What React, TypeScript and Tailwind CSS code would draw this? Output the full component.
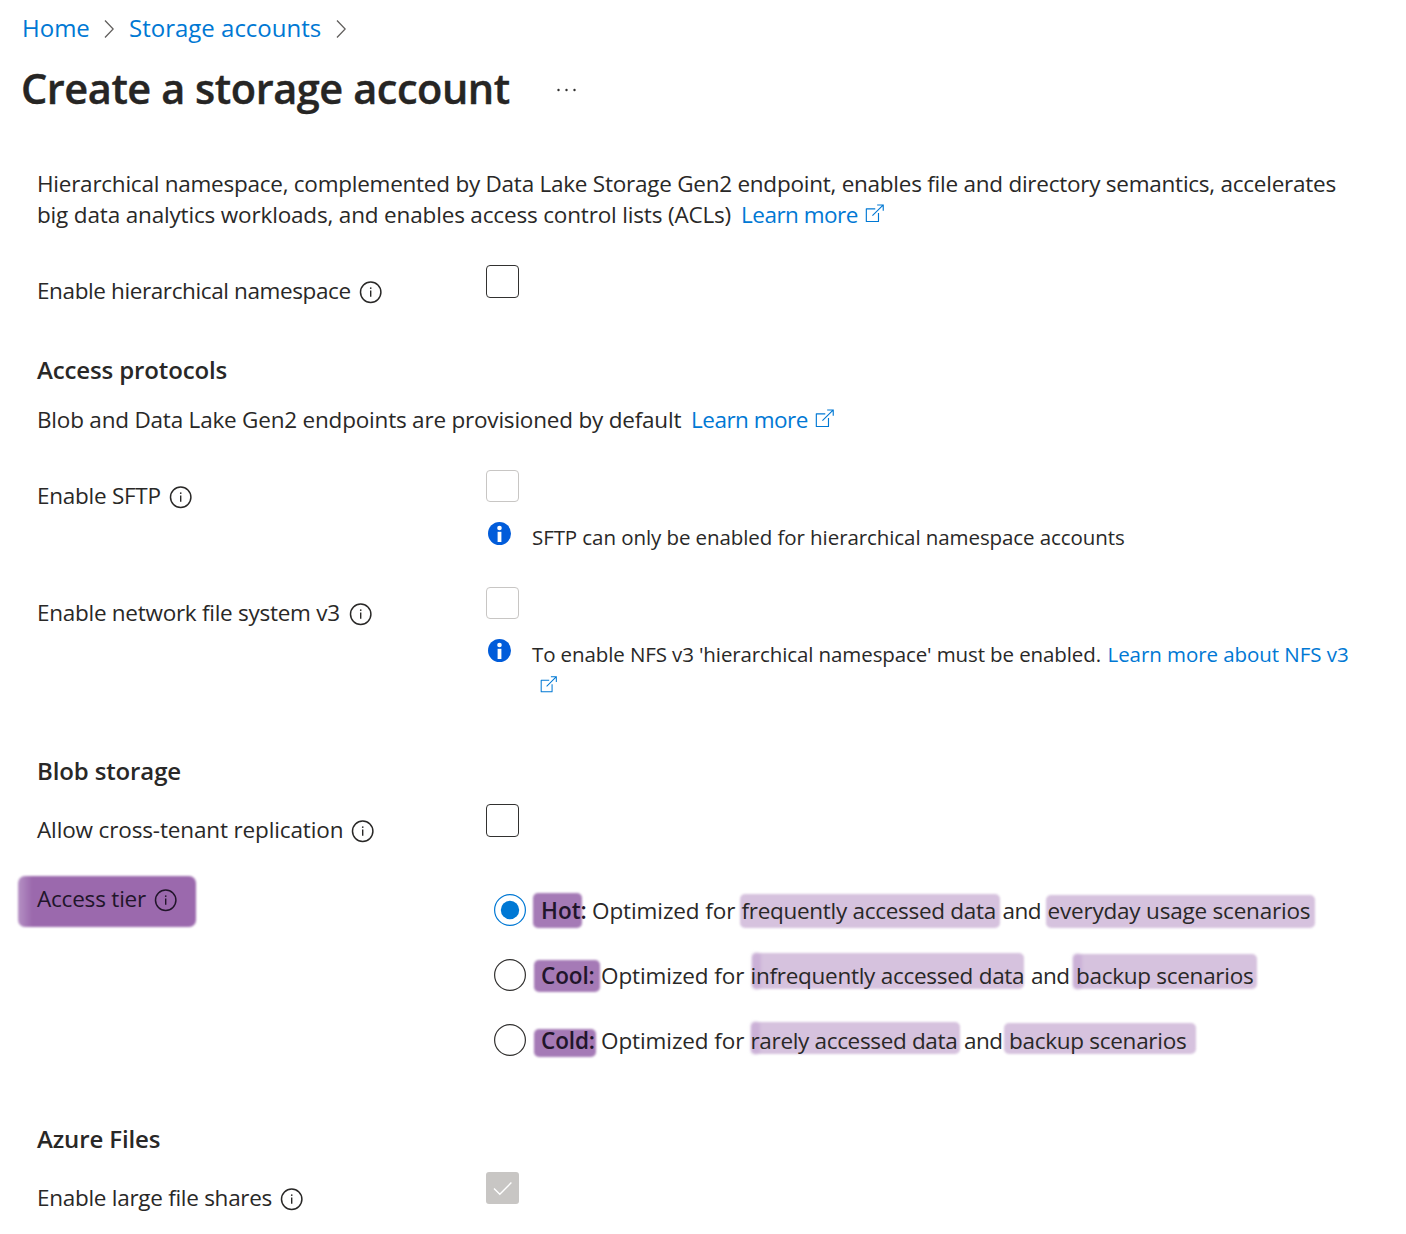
import type { ReactNode } from "react";

function InfoIcon() {
  return (
    <svg className="mt-[5px] size-[23px] shrink-0" viewBox="0 0 23 23" fill="none" stroke="currentColor">
      <circle cx="11.7" cy="11.3" r="10.2" strokeWidth="1.5" />
      <path d="M11.7 9.6V15.8" strokeWidth="1.4" />
      <path d="M11.7 6.4V7.9" strokeWidth="1.5" />
    </svg>
  );
}

function ExternalIcon({ className }: { className: string }) {
  return (
    <svg className={className} viewBox="0 0 20 20" fill="none" stroke="#0078d4" strokeWidth="1.2">
      <path d="M10.8 5.1H1.4V18.4H14.2V9.6" strokeLinejoin="round" />
      <path d="M7.8 12.2L19 1.1M12.8 1H19.2V7.2" />
    </svg>
  );
}

function InfoBadge() {
  return (
    <svg className="size-[23px] shrink-0" viewBox="0 0 23 23">
      <circle cx="11.5" cy="11.5" r="11.5" fill="#015cda" />
      <circle cx="11.5" cy="6" r="2.3" fill="#fff" />
      <rect x="9.6" y="9.8" width="3.8" height="10.2" fill="#fff" />
    </svg>
  );
}

function Chevron({ className }: { className: string }) {
  return (
    <svg className={className} viewBox="0 0 10 18" fill="none" stroke="#605e5c" strokeWidth="1.3">
      <path d="M1 .5L9.2 9L1 17.5" />
    </svg>
  );
}

function Label({ text, className }: { text: string; className: string }) {
  return (
    <div className="mt-[11px] flex h-[30px] w-[450px] shrink-0 leading-[30px]">
      <span className={`shrink-0 pl-px whitespace-nowrap ${className}`}>{text}</span>
      <InfoIcon />
    </div>
  );
}

function Heading({ children, className }: { children: ReactNode; className: string }) {
  return (
    <h2 className={`h-[30px] pl-px text-[24px] leading-[30px] font-semibold tracking-[-0.13px] whitespace-nowrap ${className}`}>
      {children}
    </h2>
  );
}

function Box({ disabled = false }: { disabled?: boolean }) {
  return (
    <div
      className={
        disabled
          ? "h-[32px] w-[33px] rounded-[4px] border-[1.5px] border-[#c8c6c4]"
          : "size-[33px] rounded-[4px] border-[1.5px] border-[#323130]"
      }
    />
  );
}

function Radio({ checked = false }: { checked?: boolean }) {
  return (
    <svg className="mr-[15px] mb-px size-[32px] shrink-0" viewBox="0 0 32 32" fill="none">
      <circle cx="16" cy="16" r="15.4" stroke={checked ? "#0078d4" : "#323130"} strokeWidth="1.2" />
      {checked && <circle cx="16" cy="16" r="9.2" fill="#0078d4" />}
    </svg>
  );
}

function Phrase({ text, className, mark, edge = false }: { text: string; className: string; mark?: string; edge?: boolean }) {
  return (
    <span className={`relative h-[65px] shrink-0 leading-[65px] whitespace-nowrap ${className}`}>
      {mark && (
        <span className={`absolute rounded-[5px] blur-[1px] ${mark}`}>
          {edge && <span className="block h-full w-[9px] rounded-[4px] bg-[#cbb1d7] blur-[1px]" />}
        </span>
      )}
      <span className="relative">{text}</span>
    </span>
  );
}

export default function App() {
  return (
    <div className="flex h-[1234px] w-[1406px] flex-col overflow-hidden bg-white font-['Open_Sans',sans-serif] text-[22.5px] text-[#292827]">
      <nav className="flex h-[58px] items-center pl-[22px] text-[24px] whitespace-nowrap text-[#0078d4]">
        <span className="mb-[2px] w-[82px]">Home</span>
        <Chevron className="h-[18px] w-[10px]" />
        <span className="mb-[2px] ml-[15px] w-[192px]">Storage accounts</span>
        <Chevron className="ml-[15px] h-[18px] w-[10px]" />
      </nav>

      <header className="flex h-[61px] items-center pl-[21px]">
        <h1 className="w-[535px] text-[41.5px] leading-[61px] font-semibold tracking-[-0.45px] whitespace-nowrap text-[#262524] [-webkit-text-stroke:0.4px_#262524]">
          Create a storage account
        </h1>
        <svg className="mt-[2px] h-[4px] w-[22px]" viewBox="0 0 22 4" fill="#323130">
          <circle cx="2.5" cy="2" r="1.2" />
          <circle cx="10.5" cy="2" r="1.2" />
          <circle cx="18.5" cy="2" r="1.2" />
        </svg>
      </header>

      <main className="flex flex-col pl-[36px]">
        <p className="mt-[49px] h-[62px] leading-[31px] whitespace-nowrap">
          <span className="block pl-px tracking-[-0.245px]">
            Hierarchical namespace, complemented by Data Lake Storage Gen2 endpoint, enables file and directory semantics, accelerates
          </span>
          <span className="flex">
            <span className="w-[705px] pl-px tracking-[-0.165px]">big data analytics workloads, and enables access control lists (ACLs)</span>
            <a className="w-[125px] tracking-[-0.5px] text-[#0078d4]">Learn more</a>
            <ExternalIcon className="-ml-px mt-[5px] size-[19px]" />
          </span>
        </p>

        <div className="mt-[35px] flex h-[52px]">
          <Label text="Enable hierarchical namespace" className="w-[323px] tracking-[-0.39px]" />
          <Box />
        </div>

        <Heading className="mt-[38px]">Access protocols</Heading>
        <p className="mt-[20px] flex h-[30px] leading-[30px] whitespace-nowrap">
          <span className="w-[655px] pl-px tracking-[-0.205px]">Blob and Data Lake Gen2 endpoints are provisioned by default</span>
          <a className="w-[125px] tracking-[-0.5px] text-[#0078d4]">Learn more</a>
          <ExternalIcon className="-ml-px mt-[4px] size-[19px]" />
        </p>

        <div className="mt-[35px] flex h-[117px]">
          <Label text="Enable SFTP" className="w-[133px] tracking-[-0.26px]" />
          <div>
            <Box disabled />
            <div className="mt-[20px] flex pl-[2px]">
              <InfoBadge />
              <p className="ml-[21px] text-[20.5px] leading-[30px] tracking-[-0.08px] whitespace-nowrap">
                SFTP can only be enabled for hierarchical namespace accounts
              </p>
            </div>
          </div>
        </div>

        <div className="flex h-[117px]">
          <Label text="Enable network file system v3" className="w-[313px] tracking-[-0.27px]" />
          <div>
            <Box disabled />
            <div className="mt-[20px] flex pl-[2px]">
              <InfoBadge />
              <div className="ml-[21px] text-[20.5px] leading-[30px] whitespace-nowrap">
                <p className="flex">
                  <span className="w-[575.5px] tracking-[-0.11px]">To enable NFS v3 'hierarchical namespace' must be enabled.</span>
                  <a className="tracking-[-0.06px] text-[#0078d4]">Learn more about NFS v3</a>
                </p>
                <ExternalIcon className="mt-[7px] ml-[8px] size-[17px]" />
              </div>
            </div>
          </div>
        </div>

        <Heading className="mt-[52px]">Blob storage</Heading>
        <div className="mt-[18px] flex h-[68px]">
          <Label text="Allow cross-tenant replication" className="w-[315px] tracking-[-0.14px]" />
          <Box />
        </div>

        <div className="mt-[6px] flex h-[195px]">
          <div className="relative mt-[-5px] h-[41px] w-[458px] shrink-0">
            <div className="absolute top-[3px] left-[-18px] h-[51px] w-[178px] rounded-[7px] bg-linear-to-r from-[#b591c4] from-0% via-[#9b69ad] via-8% to-[#9b69ad] blur-[1.3px]" />
            <div className="relative flex text-[#21152a]">
              <Label text="Access tier" className="w-[118px] tracking-[-0.2px]" />
            </div>
          </div>
          <div className="flex flex-col">
            <div className="flex h-[65px] items-center">
              <Radio checked />
              <Phrase text="Hot:" className="w-[51px] font-semibold text-[#21152a]" mark="top-[15px] left-[-8px] h-[35px] w-[49px] bg-[#a57ab6]" />
              <Phrase text="Optimized for" className="w-[149.5px] tracking-[-0.1px]" />
              <Phrase text="frequently accessed data" className="w-[261px] tracking-[-0.29px]" mark="top-[16px] left-[-2px] h-[34px] w-[260px] bg-[#d6c2de]" />
              <Phrase text="and" className="w-[45px] tracking-[-0.5px]" />
              <Phrase text="everyday usage scenarios" className="w-[270px] tracking-[-0.2px]" mark="top-[17px] left-[-2px] h-[33px] w-[269px] bg-[#d6c2de]" />
            </div>
            <div className="flex h-[65px] items-center">
              <Radio />
              <Phrase text="Cool:" className="w-[60px] font-semibold tracking-[-0.1px] text-[#21152a]" mark="top-[17px] left-[-7px] h-[32px] w-[66px] bg-[#a57ab6]" />
              <Phrase text="Optimized for" className="w-[149.5px] tracking-[-0.1px]" />
              <Phrase text="infrequently accessed data" className="w-[280.5px] tracking-[-0.27px]" mark="top-[10px] left-px h-[36px] w-[272px] bg-[#d6c2de]" edge />
              <Phrase text="and" className="w-[45px] tracking-[-0.5px]" />
              <Phrase text="backup scenarios" className="w-[180px] tracking-[-0.28px]" mark="top-[11px] left-[-3px] h-[35px] w-[184px] bg-[#d6c2de]" edge />
            </div>
            <div className="flex h-[65px] items-center">
              <Radio />
              <Phrase text="Cold:" className="w-[60px] font-semibold tracking-[-0.1px] text-[#21152a]" mark="top-[21px] left-[-7px] h-[28px] w-[62px] bg-[#a57ab6]" />
              <Phrase text="Optimized for" className="w-[149.5px] tracking-[-0.1px]" />
              <Phrase text="rarely accessed data" className="w-[213.5px] tracking-[-0.33px]" mark="top-[14px] left-0 h-[32px] w-[209px] bg-[#d6c2de]" edge />
              <Phrase text="and" className="w-[45px] tracking-[-0.5px]" />
              <Phrase text="backup scenarios" className="w-[180px] tracking-[-0.28px]" mark="top-[15px] left-[-5px] h-[31px] w-[192px] bg-[#d6c2de]" />
            </div>
          </div>
        </div>

        <Heading className="mt-[51px]">Azure Files</Heading>
        <div className="mt-[18px] flex h-[60px]">
          <Label text="Enable large file shares" className="w-[244px] tracking-[-0.28px]" />
          <div className="flex h-[32px] w-[33px] items-center justify-center rounded-[3px] bg-[#c8c6c4]">
            <svg className="size-[20px]" viewBox="0 0 20 20" fill="none" stroke="#fff" strokeWidth="1.4">
              <path d="M1 10.5L6.8 16.2L18.4 4.6" />
            </svg>
          </div>
        </div>
      </main>
    </div>
  );
}
